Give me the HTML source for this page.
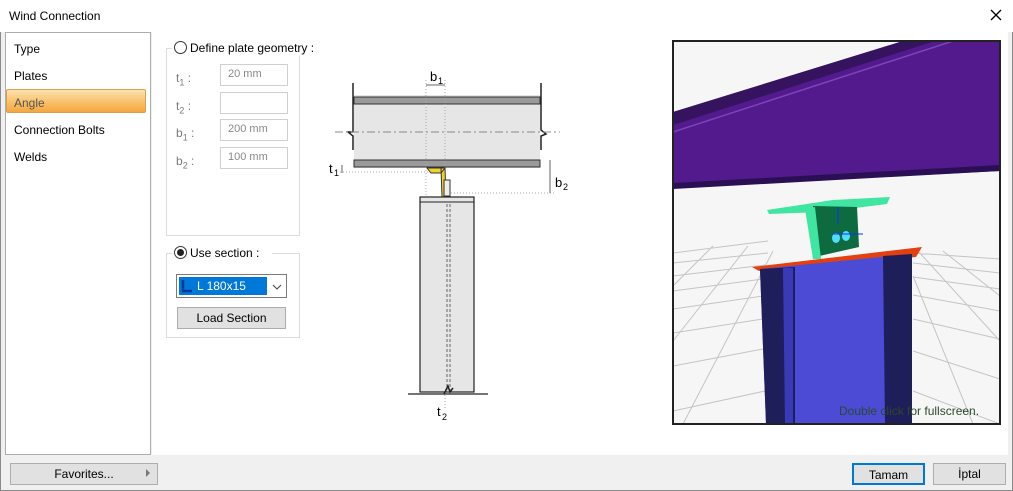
<!DOCTYPE html>
<html><head><meta charset="utf-8"><style>
*{margin:0;padding:0;box-sizing:border-box}
body{width:1013px;height:491px;background:#f0f0f0;font-family:"Liberation Sans",sans-serif;font-size:12px;color:#000;position:relative;overflow:hidden}
.abs{position:absolute}
.win{left:0;top:0;width:1013px;height:491px;border:1px solid #8a8a8a;background:#f0f0f0}
.title{left:0;top:0;width:1013px;height:32px;background:#fff}
.main{left:152px;top:32px;width:856px;height:423px;background:#fff}
.menu{left:5px;top:32px;width:146px;height:423px;background:#fff;border:1px solid #adadad}
.sel{left:6px;top:89px;width:140px;height:24px;border:1px solid #d8a050;border-radius:2px;background:linear-gradient(#fde2b0,#f9c06a 55%,#f4a640);}
.grp{border:1px solid #dcdcdc}
.inp{position:absolute;width:68px;height:22px;border:1px solid #d0d0d0;background:#fff;color:#888;font-size:11px;padding:3px 0 0 7px}
.lbl{position:absolute;color:#7a7a7a;font-size:12px}
.lbl sub{font-size:9px}
.btn{position:absolute;height:22px;border:1px solid #adadad;background:#e1e1e1;text-align:center;font-size:12px;padding-top:3px}
.radio{position:absolute;width:13px;height:13px;border:1px solid #333;border-radius:50%;background:#fff}
</style></head><body>
<div class="abs win"></div>
<div class="abs title"></div>
<div class="abs" style="left:9px;top:9px;font-size:12px">Wind Connection</div>
<svg class="abs" style="left:989px;top:8px" width="14" height="14"><path d="M2 2L12 12M12 2L2 12" stroke="#000" stroke-width="1.3"/></svg>
<div class="abs main"></div>
<div class="abs menu"></div>
<div class="abs sel"></div>
<div class="abs" style="left:14px;top:42px">Type</div>
<div class="abs" style="left:14px;top:69px">Plates</div>
<div class="abs" style="left:14px;top:96px;color:#555">Angle</div>
<div class="abs" style="left:14px;top:123px">Connection Bolts</div>
<div class="abs" style="left:14px;top:150px">Welds</div>

<div class="abs grp" style="left:166px;top:48px;width:134px;height:188px"></div>
<div class="abs" style="left:172px;top:40px;width:132px;height:16px;background:#fff"></div>
<div class="radio" style="left:174px;top:41px"></div>
<div class="abs" style="left:190px;top:41px">Define plate geometry :</div>
<div class="lbl" style="left:176px;top:71px">t<sub>1</sub> :</div>
<div class="lbl" style="left:176px;top:99px">t<sub>2</sub> :</div>
<div class="lbl" style="left:176px;top:126px">b<sub>1</sub> :</div>
<div class="lbl" style="left:176px;top:154px">b<sub>2</sub> :</div>
<div class="inp" style="left:220px;top:64px">20 mm</div>
<div class="inp" style="left:220px;top:92px"></div>
<div class="inp" style="left:220px;top:119px">200 mm</div>
<div class="inp" style="left:220px;top:147px">100 mm</div>

<div class="abs grp" style="left:166px;top:253px;width:134px;height:85px"></div>
<div class="abs" style="left:172px;top:245px;width:100px;height:16px;background:#fff"></div>
<div class="radio" style="left:174px;top:246px"></div>
<div class="abs" style="left:177px;top:249px;width:7px;height:7px;border-radius:50%;background:#222"></div>
<div class="abs" style="left:190px;top:246px">Use section :</div>
<div class="abs" style="left:176px;top:274px;width:111px;height:24px;border:1px solid #7a7a7a;background:#fff"></div>
<div class="abs" style="left:179px;top:277px;width:88px;height:18px;background:#0078d7;color:#fff;font-size:12px;padding:2px 0 0 18px">L 180x15</div>
<svg class="abs" style="left:181px;top:279px" width="12" height="14"><path d="M2 1V12H11" stroke="#003a9a" stroke-width="2.5" fill="none"/></svg>
<svg class="abs" style="left:272px;top:283px" width="10" height="8"><path d="M1 2L5 6L9 2" stroke="#444" fill="none"/></svg>
<div class="btn" style="left:177px;top:307px;width:109px">Load Section</div>

<svg class="abs" style="left:320px;top:60px" width="260" height="370">
<g stroke="#222" fill="none">
<rect x="34" y="35" width="186" height="73" fill="#e6e6e6" stroke="none"/>
<rect x="34" y="37" width="186" height="7" fill="#9a9a9a" stroke="#333"/>
<rect x="34" y="100" width="186" height="7" fill="#9a9a9a" stroke="#333"/>
<path d="M33 23V72L28 72L33 76V90" stroke-width="1.5"/>
<path d="M221 23V70L226 74L221 76V90" stroke-width="1.5"/>
<path d="M15 72H240" stroke="#888" stroke-dasharray="8 3 2 3"/>
<path d="M106 20V170M125 20V350" stroke="#aaa" stroke-dasharray="1 2"/>
<path d="M106 25H125" stroke="#666"/>
<path d="M20 112H110M128 133H235" stroke="#aaa" stroke-dasharray="1 2"/>
<path d="M230 100V133" stroke="#666"/>
<path d="M22 105V113" stroke="#666"/>
<path d="M107 108H125L121 113H111Z M121 108L125 108L126 137H122Z" fill="#f2d22a" stroke="#333"/>
<rect x="124" y="120" width="6" height="16" fill="#eee" stroke="#333"/>
<rect x="100" y="137" width="54" height="195" fill="#e6e6e6" stroke="#222" stroke-width="1.2"/>
<path d="M100 142H154" stroke="#222"/>
<path d="M127 144V330M130 144V330" stroke="#666" stroke-dasharray="3 2"/>
<path d="M88 334H168" stroke="#222" stroke-width="1.2"/>
<path d="M124 334L128 326L130 332L133 328" stroke="#222" stroke-width="1.5"/>
</g>
<text x="110" y="21" font-size="13" font-family="Liberation Sans">b</text><text x="118" y="24" font-size="9" font-family="Liberation Sans">1</text>
<text x="9" y="113" font-size="13" font-family="Liberation Sans">t</text><text x="14" y="116" font-size="9" font-family="Liberation Sans">1</text>
<text x="235" y="127" font-size="13" font-family="Liberation Sans">b</text><text x="243" y="130" font-size="9" font-family="Liberation Sans">2</text>
<text x="117" y="356" font-size="13" font-family="Liberation Sans">t</text><text x="122" y="360" font-size="9" font-family="Liberation Sans">2</text>
</svg>

<svg class="abs" style="left:673px;top:41px" width="327" height="383">
<rect width="327" height="383" fill="#f6f6f6"/>
<g stroke="#c4c4c4" fill="none">
<path d="M0 212L95 200M0 222L95 212M0 235L92 224M0 250L90 238M0 268L90 255M0 292L90 278M0 325L90 308M0 370L92 350M240 212L327 218M240 222L327 232M240 236L327 248M240 254L327 270M240 278L327 298M240 310L327 338M240 350L327 383M40 205L0 245M75 205L0 300M100 210L10 383M245 210L327 300M270 210L327 255M240 235L300 383"/>
</g>
<polygon points="0,71 230,0 327,0 327,130 0,147" fill="#521a8c"/>
<polygon points="0,71 230,0 262,0 0,84" fill="#35135f"/>
<path d="M0 91L280 0" stroke="#7a45b8" stroke-width="1.5"/>
<polygon points="0,142 327,124 327,130 0,148" fill="#2b0f55"/>
<polygon points="94,169 160,159 217,156 214,163 150,171 96,173" fill="#3fe5a0"/>
<polygon points="140,165 184,166 186,206 142,216" fill="#0e6a3f"/>
<polygon points="132,168 142,166 148,218 140,218" fill="#3fe5a0"/>
<ellipse cx="163" cy="197" rx="4" ry="5" fill="#4ee0ff"/><ellipse cx="173" cy="195" rx="4" ry="5" fill="#4ee0ff"/>
<path d="M165 166V183M160 193H190" stroke="#1030ff"/>
<polygon points="79,226 249,206 243,216 86,230" fill="#e43f10"/>
<polygon points="87,228 239,213 239,383 93,383" fill="#4b4bd6"/>
<polygon points="87,228 122,226 122,383 93,383" fill="#1e1e5a"/>
<polygon points="110,227 120,227 120,383 112,383" fill="#3a3ab8"/>
<polygon points="210,215 239,213 239,383 212,383" fill="#1e1e5a"/>
<text x="166" y="374" font-size="12" fill="#2a4a2a" font-family="Liberation Sans">Double click for fullscreen.</text>
</svg>
<div class="abs" style="left:672px;top:40px;width:329px;height:385px;border:2px solid #222"></div>

<div class="btn" style="left:10px;top:463px;width:148px">Favorites...</div>
<svg class="abs" style="left:146px;top:469px" width="6" height="8"><path d="M0 0L4 4L0 8Z" fill="#777"/></svg>
<div class="btn" style="left:852px;top:463px;width:73px;border:2px solid #0078d7;background:#e1e1e1">Tamam</div>
<div class="btn" style="left:933px;top:463px;width:73px">İptal</div>
</body></html>
